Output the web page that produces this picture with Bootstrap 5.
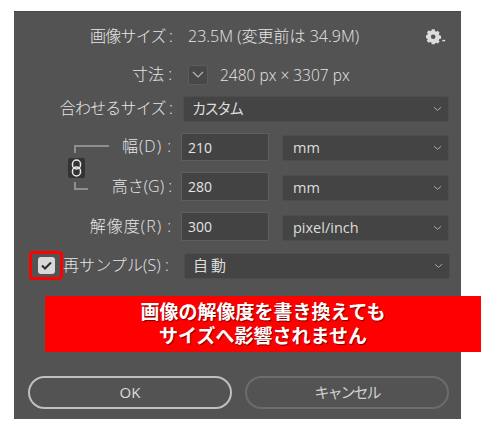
<!DOCTYPE html>
<html lang="ja">
<head>
<meta charset="utf-8">
<title>画像解像度</title>
<link rel="stylesheet" href="https://cdn.jsdelivr.net/npm/bootstrap@5.3.0/dist/css/bootstrap.min.css">
<style>
html,body{background:#fff;margin:0;height:425px;overflow:hidden}
body{font-family:"Open Sans","Noto Sans CJK JP","Noto Sans CJK SC",sans-serif;font-size:16px;font-weight:300;line-height:1.2;color:#e6e6e6}
.psdlg{position:relative;width:447px;height:408px;margin:11px 0 0 14px;background:#535353;border-top:1px solid #474747;padding-top:12px}
.psrow{padding-right:12px}
.pslabel{width:158px;flex:none;text-align:right;white-space:nowrap;color:#e6e6e6}
.kanalabel{letter-spacing:-.8px}
.latinlabel{letter-spacing:1px}
.psvalue{margin-left:16px;font-size:16px}
.r1{height:26px}.r2{height:26px;margin-top:12px}.r3{height:25px;margin-top:8px}
.linkwrap{margin-top:12px}
.linksvg{flex:none;width:46px;height:68px;margin-left:52px}
.shortlabel{width:60px;display:flex;justify-content:flex-end}
.r4{height:28px}.r5{height:29px;margin-top:11px}.r6{height:29px;margin-top:11px}
.r7{height:29px;margin-top:10px;padding-left:15px}
.psinput.form-control{width:88px;height:100%;flex:none;margin-left:9px;padding:0 6px;border-radius:0;background:#434343;border:1.5px solid #5f5f5f;color:#e4e4e4;font-size:14px;font-weight:400;box-shadow:none}
.pssel.form-select{height:26px;margin-top:2px;flex:none;padding:0 0 0 10px;border-radius:3px;background-color:#444;border:1.5px solid #4d4d4d;color:#dcdcdc;font-size:14.5px;font-weight:400;background-image:url("data:image/svg+xml,%3Csvg xmlns='http://www.w3.org/2000/svg' viewBox='0 0 10 6'%3E%3Cpath d='M1 1l4 3.500L9 1' fill='none' stroke='%23aaa' stroke-width='1.100'/%3E%3C/svg%3E");background-position:right 6px center;background-size:9px 6px;box-shadow:none}
.unit{width:167px;margin-left:13px}
.wide{width:266px;margin-left:11px;margin-top:0}
.pssel.form-select.wide{padding-left:8px;margin-top:0}
.pssel.tightsel{letter-spacing:-2px}
.pssel.loosesel{letter-spacing:3px;font-size:15px}
.togglebox{width:20px;height:20px;flex:none;margin-left:16px;background:#484848;border:1.5px solid #5c5c5c;border-radius:3px}
.dim{margin-left:12px;font-size:15.500px}
.redframe{width:34px;height:29px;flex:none;border:3.500px solid #f00;border-radius:4px}
.chk{width:17px;height:17px;background:#d8d8d8;border-radius:3px}
.samplabel{width:110px;flex:none;white-space:nowrap;color:#e6e6e6;letter-spacing:.1px}
.callout{position:absolute;left:31px;top:284px;width:436px;height:56px;padding-bottom:3px;background:#f00;color:#fff;font-family:"Noto Sans CJK JP",sans-serif;font-weight:700;font-size:19px;line-height:24px;text-shadow:1px 1px 1px #7a0000}
.psbtns{position:absolute;left:14px;top:364px;width:421px;gap:13px}
.psbtn.btn{flex:1;height:33px;padding:0;border-radius:17px;background:transparent;font-size:15px;font-weight:400;line-height:1}
.okb.btn{border:2px solid #c0c0c0;color:#dcdcdc}
.cancelb.btn{border:2px solid #6c6c6c;color:#d0d0d0;letter-spacing:-2px}
</style>
</head>
<body>
<div class="psdlg">
  <div class="psrow r1 d-flex align-items-center">
    <div class="pslabel kanalabel">画像サイズ :</div>
    <div class="psvalue flex-grow-1">23.5M (変更前は 34.9M)</div>
    <svg width="23" height="16" viewBox="0 0 24 16" aria-hidden="true">
      <path fill="#dcdcdc" fill-rule="evenodd" d="M6 0h3l.4 1.800 1.300.6 1.500-.9 2 2-.9 1.500.6 1.300 1.800.4v3l-1.800.4-.6 1.300.9 1.500-2 2-1.500-.9-1.300.6L9 15.500H6l-.4-1.800-1.300-.6-1.500.9-2-2 .9-1.500-.6-1.300L-.5 9.200v-3l1.800-.4.6-1.300-.9-1.500 2-2 1.500.9 1.300-.6zM7.500 5.300a2.400 2.400 0 1 0 0 4.800 2.400 2.400 0 0 0 0-4.800z"/>
      <rect x="17" y="11" width="3" height="1.500" fill="#dcdcdc"/>
    </svg>
  </div>
  <div class="psrow r2 d-flex align-items-center">
    <div class="pslabel">寸法 :</div>
    <div class="togglebox d-flex align-items-center justify-content-center">
      <svg width="12" height="8" viewBox="0 0 12 8" aria-hidden="true"><path d="M1 1l5 5 5-5" fill="none" stroke="#b5b5b5" stroke-width="1.200"/></svg>
    </div>
    <div class="dim">2480 px × 3307 px</div>
  </div>
  <div class="psrow r3 d-flex align-items-center">
    <div class="pslabel kanalabel">合わせるサイズ :</div>
    <select class="form-select pssel wide tightsel" aria-label="合わせるサイズ"><option>カスタム</option></select>
  </div>
  <div class="linkwrap d-flex">
    <svg class="linksvg" viewBox="0 0 46 68" aria-hidden="true">
      <path d="M9 20v-7h34M9 49v7h13" fill="none" stroke="#8f8f8f" stroke-width="2"/>
      <rect x="2" y="25" width="17" height="20" rx="2" fill="#333"/>
      <rect x="6.500" y="27" width="8" height="9" rx="4" fill="none" stroke="#e8e8e8" stroke-width="1.500"/>
      <rect x="6.500" y="34" width="8" height="9" rx="4" fill="none" stroke="#e8e8e8" stroke-width="1.500"/>
    </svg>
    <div class="flex-grow-1">
      <div class="psrow r4 d-flex align-items-center">
        <div class="pslabel shortlabel latinlabel">幅(D) :</div>
        <input class="form-control psinput" value="210" aria-label="幅">
        <select class="form-select pssel unit" aria-label="幅の単位"><option>mm</option></select>
      </div>
      <div class="psrow r5 d-flex align-items-center">
        <div class="pslabel shortlabel">高さ(G) :</div>
        <input class="form-control psinput" value="280" aria-label="高さ">
        <select class="form-select pssel unit" aria-label="高さの単位"><option>mm</option></select>
      </div>
    </div>
  </div>
  <div class="psrow r6 d-flex align-items-center">
    <div class="pslabel latinlabel">解像度(R) :</div>
    <input class="form-control psinput" value="300" aria-label="解像度">
    <select class="form-select pssel unit" aria-label="解像度の単位"><option>pixel/inch</option></select>
  </div>
  <div class="psrow r7 d-flex align-items-center">
    <div class="redframe d-flex align-items-center justify-content-center">
      <div class="chk d-flex align-items-center justify-content-center">
        <svg width="11" height="9" viewBox="0 0 11 9" aria-hidden="true"><path d="M1 4.500l3 3 6-6" fill="none" stroke="#2c2c2c" stroke-width="2"/></svg>
      </div>
    </div>
    <div class="samplabel">再サンプル(S) :</div>
    <select class="form-select pssel wide loosesel" aria-label="再サンプル"><option>自動</option></select>
  </div>
  <div class="callout d-flex flex-column align-items-center justify-content-center">
    <div>画像の解像度を書き換えても</div>
    <div>サイズへ影響されません</div>
  </div>
  <div class="psbtns d-flex">
    <button type="button" class="btn psbtn okb">OK</button>
    <button type="button" class="btn psbtn cancelb">キャンセル</button>
  </div>
</div>
</body>
</html>
